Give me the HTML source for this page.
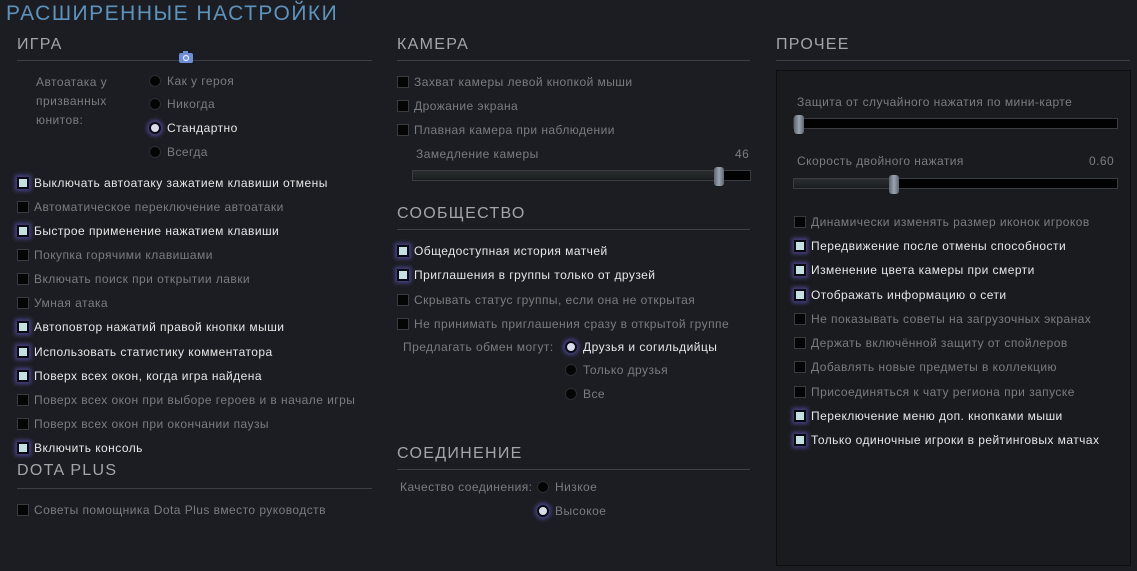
<!DOCTYPE html>
<html><head><meta charset="utf-8"><style>
*{margin:0;padding:0;box-sizing:border-box}
body{width:1137px;height:571px;background:#1c1d22;position:relative;overflow:hidden;font-family:"Liberation Sans","DejaVu Sans",sans-serif;font-size:12px;color:#7b7c80;letter-spacing:0.45px}
.a{position:absolute;white-space:nowrap;line-height:16px}
.h{position:absolute;font-size:16px;color:#a3a5a9;letter-spacing:1.3px;line-height:20px}
.ln{position:absolute;height:1px;background:#3d3f45}
.on{color:#e6e7e9}
.cb{position:absolute;width:12px;height:12px;background:#050506;border:1px solid #3a3b40}
.cb.c{background:#c6e0e2;border:2px solid #0a0a12;box-shadow:0 0 4px 2px rgba(110,100,220,.55)}
.rd{position:absolute;width:12px;height:12px;border-radius:50%;background:#040405;border:1px solid #2c2d32}
.rd.c{background:#d8dbe8;border:2px solid #0a0a12;box-shadow:0 0 4px 2px rgba(110,100,220,.6)}
.sl{position:absolute;height:11px;background:#020203;border:1px solid #3a3c42}
.sf{position:absolute;left:0;top:0;height:100%;background:linear-gradient(#2a2e31,#1a1d1f)}
.th{position:absolute;top:-4px;width:10px;height:19px;border-radius:3px;background:linear-gradient(90deg,#5d6570,#9aa4ae,#5d6570)}
</style></head><body>
<div class="a" style="left:6px;top:0;font-size:21px;line-height:28px;color:#5d93bd;letter-spacing:1.5px">РАСШИРЕННЫЕ НАСТРОЙКИ</div>

<div class="h" style="left:17px;top:35px">ИГРА</div>
<div class="ln" style="left:17px;top:60px;width:355px"></div>
<svg style="position:absolute;left:179px;top:51px" width="14" height="12" viewBox="0 0 14 12"><rect x="0" y="2" width="14" height="10" rx="2" fill="#6e8fd8"/><rect x="4" y="0" width="5" height="3" fill="#6e8fd8"/><circle cx="7" cy="7" r="2.5" fill="none" stroke="#e8ecff" stroke-width="1.2"/></svg>
<div class="a" style="left:36px;top:73px;line-height:19px">Автоатака у<br>призванных<br>юнитов:</div>
<div class="rd" style="left:149px;top:75px"></div><div class="a" style="left:167px;top:73px">Как у героя</div>
<div class="rd" style="left:149px;top:98px"></div><div class="a" style="left:167px;top:96px">Никогда</div>
<div class="rd c" style="left:149px;top:122px"></div><div class="a on" style="left:167px;top:120px">Стандартно</div>
<div class="rd" style="left:149px;top:146px"></div><div class="a" style="left:167px;top:144px">Всегда</div>

<div class="cb c" style="left:17px;top:177px"></div><div class="a on" style="left:34px;top:175px">Выключать автоатаку зажатием клавиши отмены</div>
<div class="cb" style="left:17px;top:201px"></div><div class="a" style="left:34px;top:199px">Автоматическое переключение автоатаки</div>
<div class="cb c" style="left:17px;top:225px"></div><div class="a on" style="left:34px;top:223px">Быстрое применение нажатием клавиши</div>
<div class="cb" style="left:17px;top:249px"></div><div class="a" style="left:34px;top:247px">Покупка горячими клавишами</div>
<div class="cb" style="left:17px;top:273px"></div><div class="a" style="left:34px;top:271px">Включать поиск при открытии лавки</div>
<div class="cb" style="left:17px;top:297px"></div><div class="a" style="left:34px;top:295px">Умная атака</div>
<div class="cb c" style="left:17px;top:321px"></div><div class="a on" style="left:34px;top:319px">Автоповтор нажатий правой кнопки мыши</div>
<div class="cb c" style="left:17px;top:346px"></div><div class="a on" style="left:34px;top:344px">Использовать статистику комментатора</div>
<div class="cb c" style="left:17px;top:370px"></div><div class="a on" style="left:34px;top:368px">Поверх всех окон, когда игра найдена</div>
<div class="cb" style="left:17px;top:394px"></div><div class="a" style="left:34px;top:392px">Поверх всех окон при выборе героев и в начале игры</div>
<div class="cb" style="left:17px;top:418px"></div><div class="a" style="left:34px;top:416px">Поверх всех окон при окончании паузы</div>
<div class="cb c" style="left:17px;top:442px"></div><div class="a on" style="left:34px;top:440px">Включить консоль</div>
<div class="h" style="left:17px;top:461px">DOTA PLUS</div>
<div class="ln" style="left:17px;top:488px;width:355px"></div>
<div class="cb" style="left:17px;top:504px"></div><div class="a" style="left:34px;top:502px">Советы помощника Dota Plus вместо руководств</div>

<div class="h" style="left:397px;top:35px">КАМЕРА</div>
<div class="ln" style="left:397px;top:60px;width:353px"></div>
<div class="cb" style="left:397px;top:76px"></div><div class="a" style="left:414px;top:74px">Захват камеры левой кнопкой мыши</div>
<div class="cb" style="left:397px;top:100px"></div><div class="a" style="left:414px;top:98px">Дрожание экрана</div>
<div class="cb" style="left:397px;top:124px"></div><div class="a" style="left:414px;top:122px">Плавная камера при наблюдении</div>
<div class="a" style="left:416px;top:146px">Замедление камеры</div><div class="a" style="left:735px;top:146px">46</div>
<div class="sl" style="left:412px;top:170px;width:339px"><div class="sf" style="width:305px"></div><div class="th" style="left:301px"></div></div>

<div class="h" style="left:397px;top:204px">СООБЩЕСТВО</div>
<div class="ln" style="left:397px;top:229px;width:353px"></div>
<div class="cb c" style="left:397px;top:245px"></div><div class="a on" style="left:414px;top:243px">Общедоступная история матчей</div>
<div class="cb c" style="left:397px;top:269px"></div><div class="a on" style="left:414px;top:267px">Приглашения в группы только от друзей</div>
<div class="cb" style="left:397px;top:294px"></div><div class="a" style="left:414px;top:292px">Скрывать статус группы, если она не открытая</div>
<div class="cb" style="left:397px;top:318px"></div><div class="a" style="left:414px;top:316px">Не принимать приглашения сразу в открытой группе</div>
<div class="a" style="left:403px;top:339px">Предлагать обмен могут:</div>
<div class="rd c" style="left:565px;top:341px"></div><div class="a on" style="left:583px;top:339px">Друзья и согильдийцы</div>
<div class="rd" style="left:565px;top:364px"></div><div class="a" style="left:583px;top:362px">Только друзья</div>
<div class="rd" style="left:565px;top:388px"></div><div class="a" style="left:583px;top:386px">Все</div>

<div class="h" style="left:397px;top:444px">СОЕДИНЕНИЕ</div>
<div class="ln" style="left:397px;top:469px;width:353px"></div>
<div class="a" style="left:400px;top:479px">Качество соединения:</div>
<div class="rd" style="left:537px;top:481px"></div><div class="a" style="left:555px;top:479px">Низкое</div>
<div class="rd c" style="left:537px;top:505px"></div><div class="a" style="left:555px;top:503px">Высокое</div>

<div class="h" style="left:776px;top:35px">ПРОЧЕЕ</div>
<div class="ln" style="left:776px;top:60px;width:354px"></div>
<div style="position:absolute;left:776px;top:70px;width:355px;height:496px;background:#1a1b1f;border:1px solid #0c0d0f"></div>
<div class="a" style="left:797px;top:94px">Защита от случайного нажатия по мини-карте</div>
<div class="sl" style="left:793px;top:118px;width:325px"><div class="th" style="left:0"></div></div>
<div class="a" style="left:797px;top:153px">Скорость двойного нажатия</div><div class="a" style="left:1089px;top:153px">0.60</div>
<div class="sl" style="left:793px;top:178px;width:325px"><div class="sf" style="width:100px"></div><div class="th" style="left:95px"></div></div>
<div class="cb" style="left:794px;top:216px"></div><div class="a" style="left:811px;top:214px">Динамически изменять размер иконок игроков</div>
<div class="cb c" style="left:794px;top:240px"></div><div class="a on" style="left:811px;top:238px">Передвижение после отмены способности</div>
<div class="cb c" style="left:794px;top:264px"></div><div class="a on" style="left:811px;top:262px">Изменение цвета камеры при смерти</div>
<div class="cb c" style="left:794px;top:289px"></div><div class="a on" style="left:811px;top:287px">Отображать информацию о сети</div>
<div class="cb" style="left:794px;top:313px"></div><div class="a" style="left:811px;top:311px">Не показывать советы на загрузочных экранах</div>
<div class="cb" style="left:794px;top:337px"></div><div class="a" style="left:811px;top:335px">Держать включённой защиту от спойлеров</div>
<div class="cb" style="left:794px;top:361px"></div><div class="a" style="left:811px;top:359px">Добавлять новые предметы в коллекцию</div>
<div class="cb" style="left:794px;top:386px"></div><div class="a" style="left:811px;top:384px">Присоединяться к чату региона при запуске</div>
<div class="cb c" style="left:794px;top:410px"></div><div class="a on" style="left:811px;top:408px">Переключение меню доп. кнопками мыши</div>
<div class="cb c" style="left:794px;top:434px"></div><div class="a on" style="left:811px;top:432px">Только одиночные игроки в рейтинговых матчах</div>
</body></html>
